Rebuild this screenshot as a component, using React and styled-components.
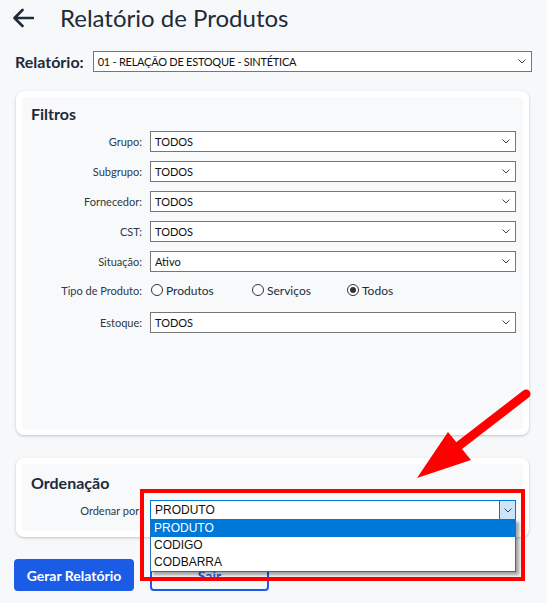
import React from 'react';
import styled, { createGlobalStyle } from 'styled-components';

const GlobalStyle = createGlobalStyle`
  body {
    margin: 0;
    background: #f7f8f9;
    font-family: Lato, "Open Sans", sans-serif;
  }
`;

const S = {
  Page: styled.div`
    position: relative;
    width: 547px;
    height: 603px;
    box-sizing: border-box;
    padding: 0 15px 0 14px;
    overflow: hidden;
    color: #1d2b3a;
  `,
  Header: styled.div`
    display: flex;
    align-items: center;
    height: 35px;
  `,
  Back: styled.svg`
    margin-left: -2px;
    flex: none;
  `,
  Title: styled.h1`
    margin: 0 0 0 26px;
    font-size: 24px;
    font-weight: 400;
    color: #1d2b3a;
  `,
  ReportRow: styled.div`
    display: flex;
    align-items: center;
    gap: 9px;
    margin-top: 16px;
  `,
  ReportLabel: styled.span`
    margin-left: 1px;
    font-size: 16px;
    font-weight: 700;
    color: #1d2b3a;
  `,
  Card: styled.div`
    margin: ${(p) => p.$mt}px 3px 0 2px;
    height: ${(p) => (p.$h ? `${p.$h}px` : 'auto')};
    box-sizing: border-box;
    padding: 6px;
    background: #fff;
    border-radius: 8px;
    box-shadow: 0 1px 3px rgba(0, 0, 0, 0.22);
  `,
  CardBody: styled.div`
    height: 100%;
    box-sizing: border-box;
    padding: ${(p) => p.$pad};
    background: #f8f9fa;
    border-radius: 3px;
  `,
  Heading: styled.h2`
    margin: 0 0 7px;
    font-size: 16px;
    line-height: 20px;
    font-weight: 700;
    color: #1d2b3a;
  `,
  FormRow: styled.div`
    display: flex;
    align-items: center;
    gap: 8px;
    flex: ${(p) => (p.$grow ? 1 : 'none')};
    height: ${(p) => p.$h || 21}px;
    margin-top: ${(p) => p.$mt || 0}px;
  `,
  Label: styled.label`
    width: 111px;
    flex: none;
    text-align: right;
    font-size: 11px;
    color: #2e3a46;
    white-space: nowrap;
  `,
  SelectWrap: styled.div`
    position: relative;
    flex: 1;
    height: 100%;
  `,
  Select: styled.div`
    display: flex;
    align-items: center;
    height: 100%;
    box-sizing: border-box;
    padding-left: 4px;
    background: #fff;
    border: 1px solid ${(p) => (p.$focused ? '#0078d7' : '#767676')};
    font-family: ${(p) => (p.$native ? '"Liberation Sans", Arial, sans-serif' : 'Lato, sans-serif')};
    font-size: ${(p) => p.$fs || 11}px;
    letter-spacing: ${(p) => p.$ls || 0}px;
    color: #111;
    white-space: nowrap;
  `,
  Chevron: styled.span`
    display: flex;
    align-items: center;
    justify-content: center;
    margin-left: auto;
    width: ${(p) => (p.$boxed ? 16 : 18)}px;
    height: 100%;
    box-sizing: border-box;
    background: ${(p) => (p.$boxed ? '#cce4f7' : 'transparent')};
    border-left: ${(p) => (p.$boxed ? '1px solid #0078d7' : 'none')};
  `,
  DropList: styled.ul`
    position: absolute;
    top: 100%;
    left: 0;
    right: 0;
    margin: -1px 0 0;
    padding: 0;
    list-style: none;
    background: #fff;
    border: 1px solid #2b6cb3;
    box-shadow: 3px 3px 3px rgba(0, 0, 0, 0.35);
    z-index: 2;
  `,
  Option: styled.li`
    height: 17px;
    line-height: 17px;
    padding-left: 3px;
    font-family: "Liberation Sans", Arial, sans-serif;
    font-size: 12px;
    color: ${(p) => (p.$active ? '#fff' : '#111')};
    background: ${(p) => (p.$active ? '#0078d7' : 'transparent')};
  `,
  Radios: styled.div`
    display: flex;
    align-items: center;
    margin-left: 1px;
  `,
  RadioItem: styled.label`
    display: flex;
    align-items: center;
    gap: 3px;
    width: ${(p) => (p.$w ? `${p.$w}px` : 'auto')};
    font-size: 12px;
    color: #1d2b3a;
  `,
  RadioDot: styled.span`
    position: relative;
    width: 12px;
    height: 12px;
    box-sizing: border-box;
    border: 1px solid #333;
    border-radius: 50%;
    background: #fff;
    &::after {
      content: '';
      display: ${(p) => (p.$checked ? 'block' : 'none')};
      position: absolute;
      left: 2px;
      top: 2px;
      width: 6px;
      height: 6px;
      border-radius: 50%;
      background: #333;
    }
  `,
  Buttons: styled.div`
    display: flex;
    gap: 16px;
    margin-top: 22px;
  `,
  Button: styled.button`
    width: ${(p) => p.$w}px;
    height: 32px;
    box-sizing: border-box;
    border-radius: 4px;
    border: 2px solid #1a5ce5;
    background: ${(p) => (p.$outline ? 'transparent' : '#1a5ce5')};
    color: ${(p) => (p.$outline ? '#1a5ce5' : '#fff')};
    font-family: Lato, sans-serif;
    font-size: 14px;
    font-weight: 700;
  `,
  Highlight: styled.div`
    position: absolute;
    left: 140px;
    top: 489px;
    width: 385px;
    height: 92px;
    box-sizing: border-box;
    border: 4px solid #ff0000;
    z-index: 3;
    pointer-events: none;
  `,
  Pointer: styled.svg`
    position: absolute;
    left: 0;
    top: 0;
    z-index: 3;
    pointer-events: none;
  `,
};

const ChevronIcon = () => (
  <svg width="8" height="5" viewBox="0 0 8 5">
    <path d="M0.5 0.5 L4 4 L7.5 0.5" fill="none" stroke="#444" strokeWidth="1" />
  </svg>
);

const SelectField = ({ value, focused, fs, ls, native, children }) => (
  <S.SelectWrap>
    <S.Select $focused={focused} $fs={fs} $ls={ls} $native={native}>
      {value}
      <S.Chevron $boxed={focused}>
        <ChevronIcon />
      </S.Chevron>
    </S.Select>
    {children}
  </S.SelectWrap>
);

const filtros = [
  { label: 'Grupo:', value: 'TODOS' },
  { label: 'Subgrupo:', value: 'TODOS' },
  { label: 'Fornecedor:', value: 'TODOS' },
  { label: 'CST:', value: 'TODOS' },
  { label: 'Situação:', value: 'Ativo' },
];

const tipos = [
  { label: 'Produtos', w: 101 },
  { label: 'Serviços', w: 95 },
  { label: 'Todos', checked: true },
];

const ordens = ['PRODUTO', 'CODIGO', 'CODBARRA'];

const App = () => {
  return (
    <>
      <GlobalStyle />
      <S.Page>
        <S.Header>
          <S.Back width="22" height="20" viewBox="0 0 22 20">
            <path
              d="M21 10H2.5 M10.5 2 L2.5 10 L10.5 18"
              fill="none"
              stroke="#1d2b3a"
              strokeWidth="2.6"
              strokeLinecap="round"
              strokeLinejoin="round"
            />
          </S.Back>
          <S.Title>Relatório de Produtos</S.Title>
        </S.Header>

        <S.ReportRow>
          <S.ReportLabel>Relatório:</S.ReportLabel>
          <S.FormRow $grow>
            <SelectField value="01 - RELAÇÃO DE ESTOQUE - SINTÉTICA" fs={11} ls={-0.25} />
          </S.FormRow>
        </S.ReportRow>

        <S.Card $mt={19} $h={344}>
          <S.CardBody $pad="7px 7px 0 9px">
            <S.Heading>Filtros</S.Heading>
            {filtros.map((f, i) => (
              <S.FormRow key={f.label} $mt={i === 0 ? 0 : 9}>
                <S.Label>{f.label}</S.Label>
                <SelectField value={f.value} />
              </S.FormRow>
            ))}
            <S.FormRow $mt={9} $h={18}>
              <S.Label>Tipo de Produto:</S.Label>
              <S.Radios>
                {tipos.map((t) => (
                  <S.RadioItem key={t.label} $w={t.w}>
                    <S.RadioDot $checked={t.checked} />
                    {t.label}
                  </S.RadioItem>
                ))}
              </S.Radios>
            </S.FormRow>
            <S.FormRow $mt={13}>
              <S.Label>Estoque:</S.Label>
              <SelectField value="TODOS" />
            </S.FormRow>
          </S.CardBody>
        </S.Card>

        <S.Card $mt={23}>
          <S.CardBody $pad="9px 7px 11px 9px">
            <S.Heading>Ordenação</S.Heading>
            <S.FormRow $h={20}>
              <S.Label>Ordenar por:</S.Label>
              <SelectField value="PRODUTO" focused native fs={12}>
                <S.DropList>
                  {ordens.map((o, i) => (
                    <S.Option key={o} $active={i === 0}>
                      {o}
                    </S.Option>
                  ))}
                </S.DropList>
              </SelectField>
            </S.FormRow>
          </S.CardBody>
        </S.Card>

        <S.Buttons>
          <S.Button $w={120}>Gerar Relatório</S.Button>
          <S.Button $w={119} $outline>
            Sair
          </S.Button>
        </S.Buttons>

        <S.Highlight />
        <S.Pointer width="547" height="603" viewBox="0 0 547 603">
          <line
            x1="526"
            y1="394"
            x2="456"
            y2="448"
            stroke="#ff0000"
            strokeWidth="9"
            strokeLinecap="round"
          />
          <polygon points="417,478 448,432 471,460" fill="#ff0000" />
        </S.Pointer>
      </S.Page>
    </>
  );
};

export default App;
